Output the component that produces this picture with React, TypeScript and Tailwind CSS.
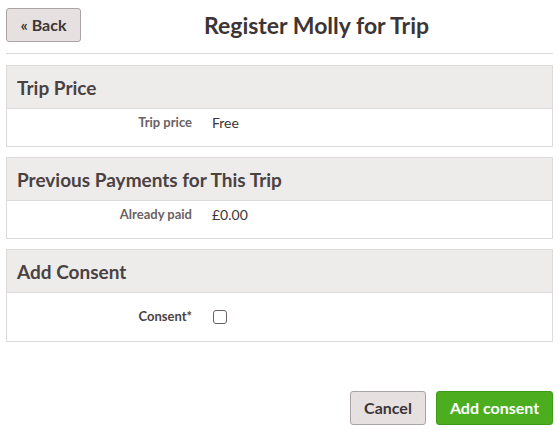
import React, { useState } from 'react';

function Panel({ title, children }: { title: string; children: React.ReactNode }) {
    return (
        <div className="border border-[#dcdada] mx-[6px]">
            <div className="bg-[#eeeceb] h-[43px] flex items-center px-[10px] border-b border-[#dcdada]">
                <h2 className="text-[19px] font-bold text-[#4a4242] leading-none">{title}</h2>
            </div>
            <div className="h-[37px] flex items-start pt-[3px]">{children}</div>
        </div>
    );
}

function Row({ label, children }: { label: string; children: React.ReactNode }) {
    return (
        <div className="flex items-center w-full">
            <div className="w-[185px] text-right text-[13px] font-bold text-[#6b6363]">{label}</div>
            <div className="pl-[20px] text-[14px] text-[#3d3535]">{children}</div>
        </div>
    );
}

export default function App() {
    const [consent, setConsent] = useState(false);

    return (
        <div className="w-[559px] h-[430px] bg-white" style={{ fontFamily: 'Lato, "Noto Sans", sans-serif' }}>
            <div className="relative h-[54px] mx-[6px] border-b border-[#dcdada] flex items-center">
                <button className="absolute left-0 top-[8px] w-[75px] h-[34px] bg-[#e6e1e0] border border-[#aaa5a4] rounded-[3px] text-[16px] font-bold text-[#3d3535]">
                    « Back
                </button>
                <h1 className="w-full text-center pl-[74px] text-[23px] font-bold text-[#3d3535] -mt-[3px]">
                    Register Molly for Trip
                </h1>
            </div>

            <div className="mt-[11px] flex flex-col gap-[10px]">
                <Panel title="Trip Price">
                    <Row label="Trip price">Free</Row>
                </Panel>
                <Panel title="Previous Payments for This Trip">
                    <Row label="Already paid">£0.00</Row>
                </Panel>
                <div className="border border-[#dcdada] mx-[6px]">
                    <div className="bg-[#eeeceb] h-[43px] flex items-center px-[10px] border-b border-[#dcdada]">
                        <h2 className="text-[19px] font-bold text-[#4a4242] leading-none">Add Consent</h2>
                    </div>
                    <div className="h-[48px] flex items-center">
                        <div className="flex items-center w-full">
                            <div className="w-[185px] text-right text-[13px] font-bold text-[#4a4242]">Consent*</div>
                            <div className="pl-[21px] flex items-center">
                                <input
                                    type="checkbox"
                                    checked={consent}
                                    onChange={() => setConsent(!consent)}
                                    className="appearance-none w-[14px] h-[14px] border border-[#6b6363] rounded-[3px] bg-white checked:bg-[#4cae1e]"
                                />
                            </div>
                        </div>
                    </div>
                </div>
            </div>

            <div className="flex justify-end gap-[10px] mt-[49px] mr-[6px]">
                <button className="w-[76px] h-[34px] bg-[#e6e1e0] border border-[#aaa5a4] rounded-[3px] text-[16px] font-bold text-[#3d3535]">
                    Cancel
                </button>
                <button className="w-[117px] h-[34px] bg-[#4cae1e] border border-[#3f9a16] rounded-[3px] text-[16px] font-bold text-white">
                    Add consent
                </button>
            </div>
        </div>
    );
}
